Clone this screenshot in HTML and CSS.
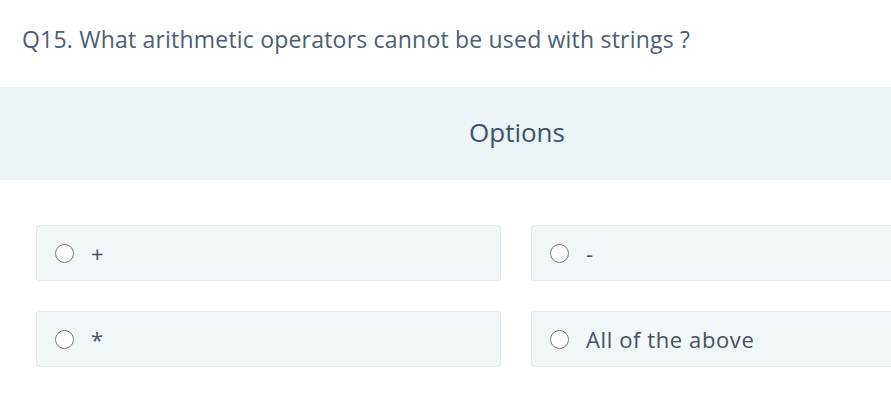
FILE: index.html
```html
<!DOCTYPE html>
<html>
<head>
<meta charset="utf-8">
<link rel="stylesheet" href="styles.css">
</head>
<body>
<div class="page">
  <h2 class="question">Q15. What arithmetic operators cannot be used with strings ?</h2>
  <div class="band"><span class="band-title">Options</span></div>
  <div class="options">
    <label class="opt"><span class="radio"></span><span class="opt-text">+</span></label>
    <label class="opt"><span class="radio"></span><span class="opt-text">-</span></label>
    <label class="opt"><span class="radio"></span><span class="opt-text">*</span></label>
    <label class="opt"><span class="radio"></span><span class="opt-text">All of the above</span></label>
  </div>
</div>
</body>
</html>
```

FILE: styles.css
```css
html, body {
  margin: 0;
  padding: 0;
  background: #ffffff;
  overflow: hidden;
}
.page {
  width: 1034px;
  font-family: "Open Sans", sans-serif;
}
.question {
  margin: 0;
  padding: 24px 0 0 22px;
  height: 62px;
  box-sizing: border-box;
  font-weight: 400;
  font-size: 23px;
  letter-spacing: 0.2px;
  line-height: 30px;
  color: #4b5e73;
}
.band {
  margin-top: 25px;
  height: 93px;
  background: #ecf4f7;
  display: flex;
  align-items: center;
  justify-content: center;
}
.band-title {
  font-family: "Open Sans", sans-serif;
  font-size: 26px;
  color: #3e5269;
  padding-bottom: 3px;
}
.options {
  display: grid;
  grid-template-columns: 465px 465px;
  column-gap: 30px;
  row-gap: 30px;
  padding: 45px 0 0 36px;
}
.opt {
  height: 56px;
  box-sizing: border-box;
  background: #f1f7f8;
  border: 1px solid #e2eaec;
  border-radius: 3px;
  display: flex;
  align-items: center;
  padding-left: 18px;
}
.radio {
  width: 17px;
  height: 17px;
  border: 1.5px solid #767676;
  border-radius: 50%;
  background: #fff;
  flex: none;
}
.opt-text {
  margin-left: 17px;
  font-size: 22px;
  letter-spacing: 0.6px;
  color: #4a4f62;
}
```
